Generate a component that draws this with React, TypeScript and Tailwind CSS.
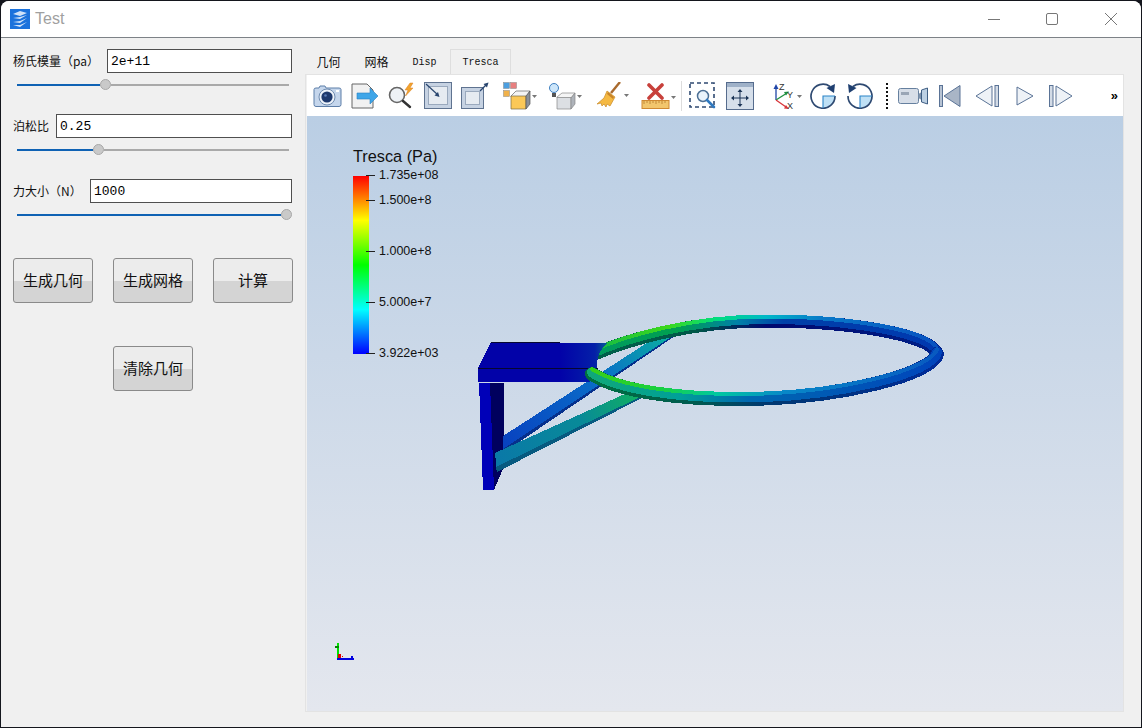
const cjk = { fontFamily: '"Noto Sans CJK SC", "Liberation Sans", sans-serif' };

const Slider = ({ left }: { left: number }) => (
  <div className="ml-[16px] mt-[6px] flex h-[11px] w-[272px] items-center">
    <div className="h-[2px] shrink-0 bg-[#0f62b4]" style={{ width: left }} />
    <div className="h-[11px] w-[11px] shrink-0 rounded-full border border-[#a8a8a8] bg-[#c9c9c9]" />
    <div className="h-[2px] flex-1 bg-[#a9a9a9]" />
  </div>
);

const Field = ({ label, value, labelW, inputW }: { label: string; value: string; labelW: number; inputW: number }) => (
  <div className="flex h-[24px] items-center pl-[12px]">
    <div className="shrink-0 whitespace-nowrap text-[12px] text-[#111]" style={{ width: labelW }}>
      {label}
    </div>
    <input
      readOnly
      value={value}
      className="h-[24px] border border-[#4f4f4f] bg-white px-[3px] font-['Liberation_Mono',monospace] text-[13px] text-black outline-none"
      style={{ width: inputW }}
    />
  </div>
);

const Btn = ({ children }: { children: string }) => (
  <div className="flex h-[45px] w-[80px] items-center justify-center rounded-[3px] border border-[#8a8a8a] bg-[linear-gradient(#ececec_52%,#d4d4d4_52%)] text-[15px] text-[#111]">
    {children}
  </div>
);

const Caret = ({ x, y }: { x: number; y: number }) => <path d={`M${x} ${y}h5l-2.5 3z`} fill="#777" />;

const Camera = () => (
  <svg width="29" height="24" viewBox="0 0 29 24" className="ml-[6px] shrink-0">
    <path d="M1 5.500Q1 4 3 4h3l1-2h5l1 2h13q2 0 2 1.500v15q0 2-2 2H3q-2 0-2-2z" fill="#c5d6ec" stroke="#5d7ea8" />
    <circle cx="14" cy="13" r="8" fill="#eef3fa" stroke="#6f8cb0" />
    <circle cx="14" cy="13" r="5.600" fill="#1f3a6e" />
    <circle cx="12.500" cy="11.500" r="1.300" fill="#5c7cb5" />
    <rect x="23" y="6" width="3" height="2" fill="#fff" />
  </svg>
);

const Doc = () => (
  <svg width="28" height="26" viewBox="0 0 28 26" className="ml-[9px] shrink-0">
    <path d="M1 1h15l6 6v18H1z" fill="#f1f1f1" stroke="#666" />
    <path d="M6 10h13V5l8 8-8 8v-5H6z" fill="#3fa6e8" stroke="#2a7fc0" strokeWidth=".6" />
  </svg>
);

const Lens = () => (
  <svg width="29" height="27" viewBox="0 0 29 27" className="ml-[8px] shrink-0">
    <circle cx="10" cy="13" r="7.500" fill="#eef2f6" stroke="#666" strokeWidth="1.600" />
    <path d="M16 19l7 6" stroke="#333" strokeWidth="2.400" strokeLinecap="round" />
    <path d="M23 1l-5 7h3l-2.500 6 7.500-8h-3l3-5z" fill="#f2a32d" stroke="#d9822b" strokeWidth=".5" />
  </svg>
);

const BoxIn = () => (
  <svg width="28" height="27" viewBox="0 0 28 27" className="ml-[8px] shrink-0">
    <rect x=".5" y=".5" width="27" height="26" fill="#c6d2e2" stroke="#5f7390" />
    <rect x="4.500" y="4.500" width="19" height="18" fill="#e6ebf1" stroke="#9aa9bd" />
    <path d="M2 2l12 11" stroke="#29466f" strokeWidth="1.200" />
    <path d="M15.500 15l-5-1.500 3.500-3.500z" fill="#29466f" />
  </svg>
);

const BoxOut = () => (
  <svg width="28" height="27" viewBox="0 0 28 27" className="ml-[9px] shrink-0">
    <rect x=".5" y="5.500" width="22" height="21" fill="#c6d2e2" stroke="#5f7390" />
    <rect x="4.500" y="9.500" width="14" height="13" fill="#e6ebf1" stroke="#9aa9bd" />
    <path d="M19 9l6-6" stroke="#29466f" strokeWidth="1.200" />
    <path d="M27.500 .5l-1.500 5-3.500-3.500z" fill="#29466f" />
  </svg>
);

const ColorCube = () => (
  <svg width="35" height="28" viewBox="0 0 35 28" className="ml-[14px] shrink-0">
    <rect x=".5" y=".5" width="6" height="6" fill="#4c9fe0" stroke="#888" strokeWidth=".5" />
    <rect x="7.500" y=".5" width="6" height="6" fill="#e87f7f" stroke="#888" strokeWidth=".5" />
    <rect x=".5" y="8.500" width="6" height="6" fill="#f0b14a" stroke="#888" strokeWidth=".5" />
    <path d="M8 14l5-5h14l-4 6H8z" fill="#f4f4f4" stroke="#666" strokeWidth=".7" />
    <path d="M8 14h15v13H8z" fill="#fbc857" stroke="#7a6a45" strokeWidth=".7" />
    <path d="M23 14l4-5v13l-4 5z" fill="#8a9098" stroke="#555" strokeWidth=".7" />
    <Caret x={29} y={13} />
  </svg>
);

const LightCube = () => (
  <svg width="35" height="28" viewBox="0 0 35 28" className="ml-[10px] shrink-0">
    <circle cx="6" cy="6" r="4.500" fill="#cde6fa" stroke="#3e7fc0" />
    <rect x="4" y="11" width="4" height="4" fill="#555" />
    <path d="M9 15l5-4h13l-4 5H9z" fill="#f5f5f5" stroke="#888" strokeWidth=".7" />
    <path d="M9 15.500h14V27H9z" fill="#dcdfe3" stroke="#888" strokeWidth=".7" />
    <path d="M23 16l4-5v11l-4 5z" fill="#aeb3ba" stroke="#888" strokeWidth=".7" />
    <Caret x={29} y={13} />
  </svg>
);

const Broom = () => (
  <svg width="34" height="28" viewBox="0 0 34 28" className="ml-[13px] shrink-0">
    <path d="M24 0l-9 11" stroke="#a96a2e" strokeWidth="2.400" />
    <path d="M11 9l8 6-5 9-3-2-1 3-2-3-2 2-1-3-4 1 7-6z" fill="#f5b942" stroke="#c98a26" strokeWidth=".7" />
    <path d="M12 10l6 5-1 2-6-5z" fill="#c7842a" />
    <Caret x={28} y={12} />
  </svg>
);

const Ruler = () => (
  <svg width="35" height="26" viewBox="0 0 35 26" className="ml-[11px] shrink-0">
    <rect x="1" y="17.500" width="27" height="8" fill="#f2c66d" stroke="#d08a32" />
    <path d="M3 18v3M6 18v2M9 18v3M12 18v2M15 18v3M18 18v2M21 18v3M24 18v2" stroke="#b57a2c" strokeWidth=".8" />
    <path d="M8 2l13 13M21 2L8 15" stroke="#c8403b" strokeWidth="3.600" strokeLinecap="round" />
    <Caret x={30} y={13} />
  </svg>
);

const ZoomBox = () => (
  <svg width="27" height="27" viewBox="0 0 27 27" className="ml-[7px] shrink-0">
    <rect x="1" y="1" width="24" height="24" fill="none" stroke="#2f4a72" strokeWidth="1.600" strokeDasharray="4 3" />
    <rect x="9" y="9" width="10" height="10" fill="#fff" />
    <circle cx="14" cy="14" r="5.500" fill="#eaf3fb" stroke="#4d7095" strokeWidth="1.500" />
    <path d="M18 18l7 7" stroke="#2f79c0" strokeWidth="2.600" strokeLinecap="round" />
  </svg>
);

const Move = () => (
  <svg width="28" height="28" viewBox="0 0 28 28" className="ml-[10px] shrink-0">
    <rect x=".5" y=".5" width="27" height="27" fill="#d6dfea" stroke="#566c8d" />
    <rect x="1" y="1" width="26" height="4" fill="#9fb1c8" />
    <path d="M14 9v14M7 16h14" stroke="#1d3556" />
    <path d="M14 7l-2.500 3h5zM14 25l-2.500-3h5zM5 16l3-2.500v5zM23 16l-3-2.500v5z" fill="#1d3556" />
  </svg>
);

const Axes = () => (
  <svg width="32" height="28" viewBox="0 0 32 28" className="ml-[17px] shrink-0">
    <path d="M5 18V5" stroke="#2045a8" strokeWidth="1.300" />
    <path d="M5 2l-2.500 5h5z" fill="#2045a8" />
    <path d="M5 18l11-7" stroke="#1f9140" strokeWidth="1.300" />
    <path d="M18 9.500l-5 .5 2 3.500z" fill="#1f9140" />
    <path d="M5 18l10 7" stroke="#d8353a" strokeWidth="1.300" />
    <path d="M18 27l-5-.5 2-3.500z" fill="#d8353a" />
    <text x="8" y="8" fontSize="9" fill="#333" fontFamily="Liberation Sans">Z</text>
    <text x="16" y="16" fontSize="9" fill="#333" fontFamily="Liberation Sans">Y</text>
    <text x="16" y="27" fontSize="9" fill="#333" fontFamily="Liberation Sans">X</text>
    <Caret x={26} y={13} />
  </svg>
);

const Rotate = ({ flip, cls }: { flip?: boolean; cls: string }) => (
  <svg width="26" height="26" viewBox="0 0 26 26" className={cls}>
    <g transform={flip ? "translate(26 0) scale(-1 1)" : undefined}>
      <path d={flip ? "M13 13V25A12 12 0 0 1 1 13z" : "M13 13h12A12 12 0 0 1 13 25z"} fill="#bfe0f5" />
      <path d="M20 3.500A12 12 0 1 0 25 13" fill="none" stroke="#2f4a72" strokeWidth="1.700" />
      <path d={flip ? "M1 13h12v12" : "M13 25V13h12"} fill="none" stroke="#2a84c8" strokeWidth="1.100" />
      <path d="M25 1l-1 9-7.500-5z" fill="#1f3f70" />
    </g>
  </svg>
);

const Dots = () => (
  <div className="ml-[13px] h-[26px] w-[2px] shrink-0 bg-[repeating-linear-gradient(#111_0_2px,transparent_2px_4px)]" />
);

const Video = () => (
  <svg width="30" height="18" viewBox="0 0 30 18" className="ml-[10px] shrink-0">
    <rect x=".5" y="1.500" width="20" height="15" rx="2" fill="#d7dee8" stroke="#66809f" />
    <rect x="3" y="5" width="8" height="3" fill="#9aa6b6" />
    <path d="M20.500 7l3-2v8l-3-2z" fill="#7e93ad" />
    <path d="M23.500 3l6-2v16l-6-2z" fill="#bcd0e3" stroke="#3f5e83" />
  </svg>
);

const First = () => (
  <svg width="22" height="22" viewBox="0 0 22 22" className="ml-[11px] shrink-0">
    <rect x=".5" y=".5" width="3" height="21" fill="#b7c3d3" stroke="#5a7396" />
    <path d="M21 .5v21L5 11z" fill="#a9b5c6" stroke="#5a7396" />
  </svg>
);

const Prev = () => (
  <svg width="24" height="22" viewBox="0 0 24 22" className="ml-[14px] shrink-0">
    <path d="M17 1v20L1 11z" fill="#eef2f7" stroke="#5a7396" />
    <rect x="20" y=".5" width="3.500" height="21" fill="#d3dbe6" stroke="#5a7396" />
  </svg>
);

const Play = () => (
  <svg width="18" height="20" viewBox="0 0 18 20" className="ml-[17px] shrink-0">
    <path d="M1 1v18l16-9z" fill="#eef2f7" stroke="#5a7396" />
  </svg>
);

const Last = () => (
  <svg width="24" height="22" viewBox="0 0 24 22" className="ml-[15px] shrink-0">
    <rect x=".5" y=".5" width="3.500" height="21" fill="#d3dbe6" stroke="#5a7396" />
    <path d="M7 1v20l16-10z" fill="#eef2f7" stroke="#5a7396" />
  </svg>
);

const Toolbar = () => (
  <div className="flex h-[41px] items-center bg-white pr-[5px]">
    <Camera />
    <Doc />
    <Lens />
    <BoxIn />
    <BoxOut />
    <ColorCube />
    <LightCube />
    <Broom />
    <Ruler />
    <div className="ml-[5px] h-[30px] w-[1px] shrink-0 bg-[#dddddd]" />
    <ZoomBox />
    <Move />
    <Axes />
    <Rotate cls="ml-[7px] shrink-0" />
    <Rotate flip cls="ml-[11px] shrink-0" />
    <Dots />
    <Video />
    <First />
    <Prev />
    <Play />
    <Last />
    <div className="ml-auto font-['Liberation_Sans',sans-serif] text-[13px] font-bold leading-none text-black">»</div>
  </div>
);

const TICKS = [
  { y: 175, label: "1.735e+08" },
  { y: 200, label: "1.500e+8" },
  { y: 251, label: "1.000e+8" },
  { y: 302, label: "5.000e+7" },
  { y: 353, label: "3.922e+03" },
];

const Legend = () => (
  <div className="absolute left-[46px] top-[31px] font-['Liberation_Sans',sans-serif] text-[#111]">
    <div className="whitespace-nowrap text-[16.300px] leading-[18px]">Tresca (Pa)</div>
    <div className="mt-[11px] h-[178px] w-[16px] bg-[linear-gradient(to_top,#0000ff,#00ffff_25%,#00ff00_50%,#ffff00_75%,#ff0000)]" />
    {TICKS.map((t) => (
      <div key={t.y} className="absolute left-[13px] flex items-center" style={{ top: t.y - 147 - 8 }}>
        <div className="h-[1px] w-[9px] bg-[#222]" />
        <div className="ml-[4px] whitespace-nowrap text-[12.500px] leading-[16px]">{t.label}</div>
      </div>
    ))}
  </div>
);

const ringBack = "M590 356C625 340 690 321 767 321C845 321 932 334 937 354";
const ringFront = "M937 354C932 374 840 399 740 399C680 399 620 392 592 374";

const Tube = ({ d, id, w }: { d: string; id: string; w: number }) => (
  <g fill="none">
    <path d={d} stroke={`url(#${id}d)`} strokeWidth={w} strokeLinecap="round" />
    <path d={d} stroke={`url(#${id}m)`} strokeWidth={w - 4} strokeLinecap="round" transform="translate(0 -1.500)" />
    <path d={d} stroke={`url(#${id}b)`} strokeWidth="4" strokeLinecap="round" transform={`translate(0 ${2 - w / 2})`} />
  </g>
);

const Model = () => (
  <svg viewBox="307 116 816 595" shapeRendering="crispEdges" className="absolute inset-0 h-full w-full">
    <defs>
      <linearGradient id="bb" gradientUnits="userSpaceOnUse" x1="590" y1="0" x2="942" y2="0">
        <stop offset="0" stopColor="#12b84a" />
        <stop offset=".22" stopColor="#3cd81c" />
        <stop offset=".36" stopColor="#00dd80" />
        <stop offset=".5" stopColor="#00b8c8" />
        <stop offset=".66" stopColor="#0878c8" />
        <stop offset="1" stopColor="#0850c0" />
      </linearGradient>
      <linearGradient id="bm" gradientUnits="userSpaceOnUse" x1="590" y1="0" x2="942" y2="0">
        <stop offset="0" stopColor="#009a60" />
        <stop offset=".25" stopColor="#00a050" />
        <stop offset=".42" stopColor="#0080a8" />
        <stop offset=".55" stopColor="#0040a8" />
        <stop offset="1" stopColor="#0038b0" />
      </linearGradient>
      <linearGradient id="bd" gradientUnits="userSpaceOnUse" x1="590" y1="0" x2="942" y2="0">
        <stop offset="0" stopColor="#00604a" />
        <stop offset=".3" stopColor="#005848" />
        <stop offset=".5" stopColor="#00086e" />
        <stop offset="1" stopColor="#002088" />
      </linearGradient>
      <linearGradient id="fb" gradientUnits="userSpaceOnUse" x1="590" y1="0" x2="942" y2="0">
        <stop offset="0" stopColor="#38d018" />
        <stop offset=".2" stopColor="#18d040" />
        <stop offset=".36" stopColor="#00c8a0" />
        <stop offset=".55" stopColor="#0888c8" />
        <stop offset="1" stopColor="#0858c0" />
      </linearGradient>
      <linearGradient id="fm" gradientUnits="userSpaceOnUse" x1="590" y1="0" x2="942" y2="0">
        <stop offset="0" stopColor="#10a878" />
        <stop offset=".25" stopColor="#00a098" />
        <stop offset=".45" stopColor="#0068b0" />
        <stop offset="1" stopColor="#0044bc" />
      </linearGradient>
      <linearGradient id="fd" gradientUnits="userSpaceOnUse" x1="590" y1="0" x2="942" y2="0">
        <stop offset="0" stopColor="#007040" />
        <stop offset=".3" stopColor="#005a50" />
        <stop offset=".5" stopColor="#003870" />
        <stop offset="1" stopColor="#002a98" />
      </linearGradient>
      <linearGradient id="plate" gradientUnits="userSpaceOnUse" x1="560" y1="0" x2="610" y2="0">
        <stop offset="0" stopColor="#0202a8" />
        <stop offset=".7" stopColor="#0420a8" />
        <stop offset="1" stopColor="#0a6a90" />
      </linearGradient>
      <linearGradient id="s1" gradientUnits="userSpaceOnUse" x1="503" y1="443" x2="672" y2="338">
        <stop offset="0" stopColor="#0842c0" />
        <stop offset=".6" stopColor="#0a6ec8" />
        <stop offset="1" stopColor="#0ab0a0" />
      </linearGradient>
      <linearGradient id="s3" gradientUnits="userSpaceOnUse" x1="495" y1="462" x2="640" y2="395">
        <stop offset="0" stopColor="#0a78a8" />
        <stop offset=".6" stopColor="#088a98" />
        <stop offset="1" stopColor="#10b060" />
      </linearGradient>
    </defs>

    <polygon points="490,383 504,383 504,456 505,464 494,490" fill="#00005e" />
    <polygon points="503,436 653,339 675,336 503,453" fill="url(#s1)" />
    <polygon points="503,453 675,336 668,339 503,449" fill="#06308c" />
    <polygon points="495,453 627,393 642,398 497,472" fill="url(#s3)" />
    <polygon points="496,467 640,397 642,398 497,472" fill="#075a80" />
    <Tube d={ringBack} id="b" w={13} />
    <path d="M491 342.500H608Q596 352 597 368L590 382H478V368z" fill="url(#plate)" />
    <path d="M478 368H598" stroke="#070730" strokeWidth="1" />
    <path d="M491 342.500H560" stroke="#070730" strokeWidth="1" />
    <polygon points="479,383 490,383 494,490 483,490" fill="#0000b8" />
    <Tube d={ringFront} id="f" w={14} />

    <rect x="337" y="643" width="2" height="16" fill="#00e000" />
    <rect x="335" y="646" width="4" height="2" fill="#008800" />
    <rect x="338" y="654" width="3" height="5" fill="#e00000" />
    <rect x="342" y="656" width="1" height="1" fill="#e00000" />
    <rect x="337" y="658" width="17" height="2" fill="#0000e0" />
    <rect x="351" y="656" width="2" height="2" fill="#0000e0" />
  </svg>
);

export default function App() {
  return (
    <div className="h-[728px] w-[1142px] overflow-hidden bg-[#14161d] px-[1px] pt-[1px]" style={cjk}>
      <div className="flex h-[726px] flex-col overflow-hidden rounded-t-[8px] bg-[#f0f0f0]">
        <div className="flex h-[37px] shrink-0 items-center border-b border-[#7d8287] bg-white">
          <svg width="20" height="20" viewBox="0 0 20 20" className="ml-[9px] shrink-0">
            <rect width="20" height="20" fill="#1b72dc" />
            <path d="M3 5l7-3 7 2-7 3zM3 9l7-1 7-2-7 4zM3 13l7-1 7-3-7 5zM3 16l7 2 7-5-7 3z" fill="#cfe2f8" />
          </svg>
          <div className="ml-[5px] font-['Liberation_Sans',sans-serif] text-[16px] text-[#a0a0a0]">Test</div>
          <div className="ml-auto flex items-center">
            <div className="h-[1px] w-[12px] bg-[#777]" />
            <div className="ml-[46px] h-[12px] w-[12px] rounded-[2px] border border-[#777]" />
            <svg width="12" height="12" viewBox="0 0 12 12" className="ml-[47px] mr-[24px]">
              <path d="M0 0l12 12M12 0L0 12" stroke="#777" strokeWidth="1" />
            </svg>
          </div>
        </div>

        <div className="flex flex-1">
          <div className="w-[304px] shrink-0 pt-[11px]">
            <Field label="杨氏模量（pa）" value="2e+11" labelW={94} inputW={185} />
            <Slider left={83} />
            <div className="mt-[24px]">
              <Field label="泊松比" value="0.25" labelW={43} inputW={236} />
            </div>
            <Slider left={76} />
            <div className="mt-[24px]">
              <Field label="力大小（N）" value="1000" labelW={77} inputW={202} />
            </div>
            <Slider left={264} />
            <div className="ml-[12px] mt-[38px] flex gap-[20px]">
              <Btn>生成几何</Btn>
              <Btn>生成网格</Btn>
              <Btn>计算</Btn>
            </div>
            <div className="ml-[112px] mt-[43px]">
              <Btn>清除几何</Btn>
            </div>
          </div>

          <div className="w-[819px] shrink-0 pt-[11px]">
            <div className="flex h-[25px] items-end text-[12px] text-[#111]">
              <div className="flex h-[24px] w-[47px] items-center justify-center">几何</div>
              <div className="flex h-[24px] w-[49px] items-center justify-center">网格</div>
              <div className="flex h-[24px] w-[49px] items-center justify-center pr-[2px] font-['Liberation_Mono',monospace] text-[10px]">
                Disp
              </div>
              <div className="flex h-[25px] w-[61px] items-center justify-center border border-b-0 border-[#dedede] font-['Liberation_Mono',monospace] text-[10px]">
                Tresca
              </div>
            </div>
            <div className="h-[638px] border border-[#e3e3e3] pl-[1px]">
              <Toolbar />
              <div className="relative h-[595px] bg-[linear-gradient(#bacee4,#e4e7ee)]">
                <Legend />
                <Model />
              </div>
            </div>
          </div>
        </div>
      </div>
    </div>
  );
}
